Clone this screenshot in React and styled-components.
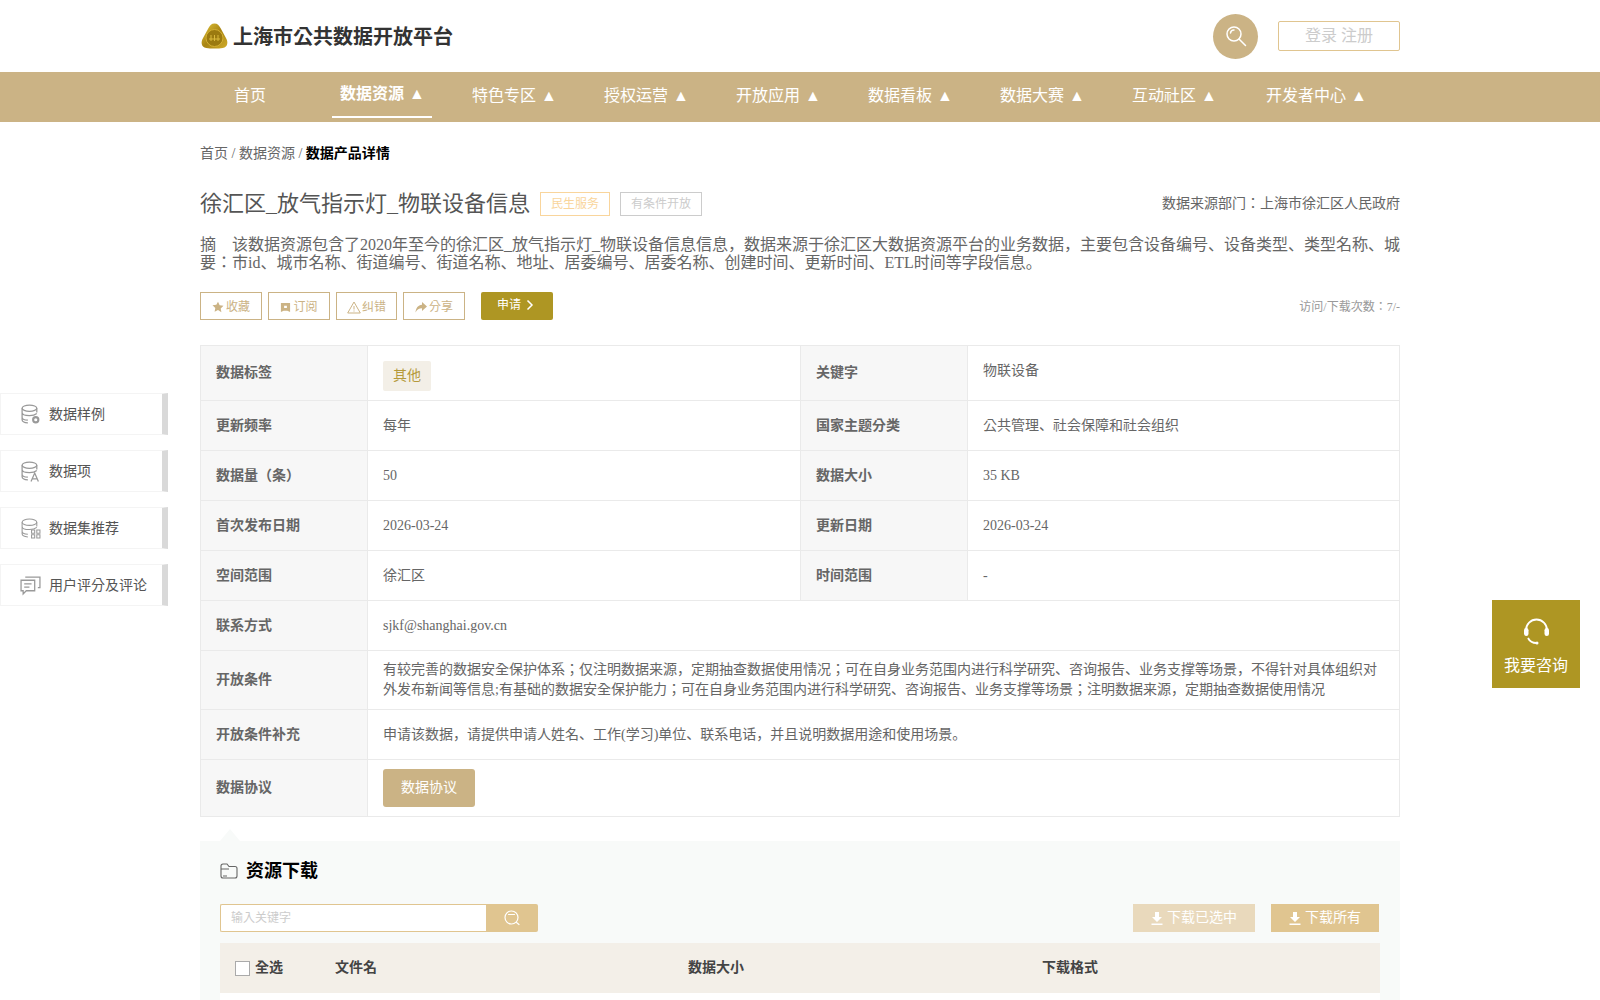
import React from "react";
import styled, { createGlobalStyle } from "styled-components";

const Global = createGlobalStyle`
  html, body { margin: 0; padding: 0; background: #fff; }
  body { font-family: "Liberation Serif", "Noto Sans CJK KR", serif; color: #666; line-height: 20px; }
  * { box-sizing: border-box; }
`;
const Page = styled.div`position: relative; width: 1600px; height: 1000px; overflow: hidden; background: #fff;`;
const Wrap = styled.div`width: 1200px; margin: 0 auto;`;
const Header = styled(Wrap)`height: 72px; display: flex; align-items: center; justify-content: space-between;`;
const Brand = styled.div`display: flex; align-items: center; gap: 5px; font-size: 20px; font-weight: bold; color: #333; margin-left: 1px; line-height: 22px;`;
const BrandName = styled.span`padding-top: 2px;`;
const HeadRight = styled.div`display: flex; align-items: center; gap: 20px;`;
const RoundSearch = styled.div`width: 45px; height: 45px; border-radius: 50%; background: #cbb385; display: flex; align-items: center; justify-content: center;`;
const Login = styled.div`width: 122px; height: 30px; border: 1px solid #e0c590; border-radius: 2px; color: #ccc; font-size: 16px; display: flex; align-items: center; justify-content: center;`;
const NavBar = styled.div`height: 50px; background: #cbb385;`;
const NavInner = styled(Wrap)`display: flex; gap: 32px;`;
const NavItem = styled.div`
  width: 100px; flex: none; height: 46px; margin-left: ${p => (p.$last ? "10px" : "0")}; line-height: ${p => (p.$active ? "44px" : "48px")};
  text-align: center; white-space: nowrap; font-size: 16px; color: #fff;
  font-weight: ${p => (p.$active ? "bold" : "normal")};
  border-bottom: 2px solid ${p => (p.$active ? "#fff" : "transparent")};
`;
const Arrow = styled.span`margin: 0 -1px 0 1px; font-weight: normal;`;
const Crumb = styled.div`margin-top: 22px; height: 20px; font-size: 14px; color: #666;`;
const CrumbNow = styled.b`color: #000;`;
const TitleRow = styled.div`margin-top: 25px; height: 30px; display: flex; align-items: center;`;
const Title = styled.h1`margin: 0; font-size: 22px; font-weight: normal; color: #555;`;
const Tag = styled.span`
  height: 24px; margin-left: ${p => p.$ml}px; width: ${p => p.$w}px; border: 1px solid ${p => p.$b};
  color: ${p => p.$c}; font-size: 12px; display: flex; align-items: center; justify-content: center;
`;
const Source = styled.div`margin-left: auto; font-size: 14px; color: #666;`;
const Desc = styled.div`margin-top: 17px; display: flex; font-size: 16px; line-height: 18px; color: #666;`;
const DescLabel = styled.div`width: 32px; flex: none;`;
const DescBody = styled.div`flex: 1; text-align: justify;`;
const Actions = styled.div`margin-top: 20px; height: 28px; display: flex; align-items: center; gap: 6px;`;
const ActBtn = styled.div`
  width: ${p => p.$w}px; height: 28px; padding-top: 2px; border: 1px solid #cbb385; color: #cbb385; font-size: 12px;
  display: flex; align-items: center; justify-content: center; gap: ${p => p.$g ?? 2}px;
`;
const Apply = styled.div`
  width: 72px; height: 28px; margin-left: 10px; padding: 0 0 3px 16px; background: #ae9623; border-radius: 2px; color: #fff; font-size: 12px;
  display: flex; align-items: center; gap: 5px;
`;
const Visits = styled.div`margin-left: auto; padding-top: 2px; font-size: 12px; color: #999;`;
const Table = styled.table`
  margin-top: 25px; width: 1199px; table-layout: fixed; border-collapse: collapse; font-size: 14px; color: #666;
  th, td { border: 1px solid #eaeaea; padding: 0 15px; text-align: left; }
  th { background: #f7f7f7; font-weight: bold; color: #666; }
`;
const Row = styled.tr`height: ${p => p.$h}px;`;
const Pill = styled.span`display: inline-block; margin-top: 5px; padding: 0 10px; height: 30px; line-height: 30px; background: #f3efe7; color: #b59a3c; border-radius: 2px;`;
const Raised = styled.span`position: relative; top: -2px;`;
const Agreement = styled.div`width: 92px; height: 38px; background: #cbb385; border-radius: 3px; color: #fff; display: flex; align-items: center; justify-content: center;`;
const Download = styled.section`position: relative; margin-top: 24px; height: 300px; background: #f8faf9; padding: 18px 20px 0;`;
const Tri = styled.div`position: absolute; left: 20px; top: -12px; width: 0; height: 0; border-left: 10px solid transparent; border-right: 10px solid transparent; border-bottom: 12px solid #f8faf9;`;
const DlHead = styled.div`display: flex; align-items: center; gap: 8px; height: 24px; font-size: 18px; font-weight: bold; color: #000;`;
const DlTools = styled.div`margin-top: 21px; display: flex; align-items: center; height: 28px;`;
const SearchBox = styled.div`width: 266px; height: 28px; background: #fff; border: 1px solid #e0c590; border-right: none; border-radius: 2px 0 0 2px; font-size: 12px; color: #ccc; display: flex; align-items: center; padding-left: 10px;`;
const SearchBtn = styled.div`width: 52px; height: 28px; background: #e0c590; border-radius: 0 2px 2px 0; display: flex; align-items: center; justify-content: center;`;
const DlBtn = styled.div`
  width: ${p => p.$w}px; height: 28px; margin-left: ${p => p.$ml}px; background: ${p => p.$bg}; color: #fff; font-size: 14px;
  display: flex; align-items: center; justify-content: center; gap: 4px;
`;
const ListHead = styled.div`
  margin-top: 11px; width: 1160px; height: 50px; background: #f3efe8; display: grid; grid-template-columns: 115px 353px 354px 1fr;
  align-items: center; font-size: 14px; font-weight: bold; color: #444;
`;
const AllCell = styled.label`display: flex; align-items: center; gap: 5px; padding-left: 15px;`;
const Check = styled.span`width: 15px; height: 15px; background: #fff; border: 1px solid #aaa;`;
const ListBody = styled.div`width: 1160px; height: 100px; background: #fff;`;
const Side = styled.nav`position: absolute; left: 0; top: 393px; display: flex; flex-direction: column; gap: 15px;`;
const SideItem = styled.div`
  width: 168px; height: 42px; background: #fff; border: 1px solid #f4f4f4; border-right: 6px solid #d9d9d9;
  display: flex; align-items: center; padding-left: 19px; gap: 8px; font-size: 14px; color: #555;
`;
const SideText = styled.span`padding-top: 2px;`;
const Consult = styled.div`
  position: absolute; left: 1492px; top: 600px; width: 88px; height: 88px; background: #ae9623; color: #fff; font-size: 16px;
  display: flex; flex-direction: column; align-items: center; padding-top: 18px; gap: 11px;
`;

const Lens = () => (
  <svg width="22" height="22" viewBox="0 0 22 22" fill="none" stroke="#fff" strokeWidth="1.5" strokeLinecap="round">
    <circle cx="9" cy="9" r="7" /><path d="M14 14l6.500 6.500M5.500 8a3.500 3.500 0 0 1 3.500-3" />
  </svg>
);
const SmallLens = () => (
  <svg width="16" height="16" viewBox="0 0 16 16" fill="none" stroke="#fff" strokeWidth="1.200" strokeLinecap="round">
    <circle cx="7.500" cy="7.500" r="6.500" /><path d="M12.500 12.500l2.500 2M4.500 4.500h6" />
  </svg>
);
const Logo = () => (
  <svg width="27" height="26" viewBox="0 0 27 26">
    <defs>
      <linearGradient id="g" x1="0" y1="0" x2="1" y2="1">
        <stop offset="0" stopColor="#e6c93c" /><stop offset=".5" stopColor="#a88413" /><stop offset="1" stopColor="#d1ad2a" />
      </linearGradient>
    </defs>
    <path d="M13.5 0.5c3 0 4.5 2 6 4.5l6 11c1.5 3 1.200 7-2 8.500-3 1.200-6.500 1-10 1s-7 .2-10-1c-3.200-1.500-3.500-5.500-2-8.500l6-11c1.500-2.500 3-4.500 6-4.500z" fill="url(#g)" />
    <circle cx="13.500" cy="15" r="8.500" fill="#9b7a10" stroke="#d4b033" />
    <path d="M8 16h11M10 12v6M13.500 12v6M17 12v6" stroke="#d9b93d" strokeWidth="1" fill="none" />
  </svg>
);
const Star = () => (<svg width="12" height="12" viewBox="0 0 24 24" fill="#cbb385"><path d="M12 1.500l3.300 7 7.700 1-5.600 5.300 1.400 7.700L12 18l-6.800 3.500 1.400-7.700L1 8.500l7.700-1z" /></svg>);
const Flag = () => (<svg width="11" height="11" viewBox="0 0 12 12"><path fillRule="evenodd" fill="#cbb385" d="M1 1h10v10L8 9.500H4L1 11zM4.500 4h3v2.500h-3z" /></svg>);
const Warn = () => (<svg width="14" height="13" viewBox="0 0 14 13" fill="none" stroke="#cbb385" strokeWidth="1"><path d="M7 1l6.300 11H.7zM7 5v3.500M7 9.500v1" /></svg>);
const Share = () => (<svg width="12" height="11" viewBox="0 0 12 11" fill="#cbb385"><path d="M7 0l5 4.500L7 9V6.300C4 6.300 2 7.500.5 10.500.8 6 3 3 7 2.700z" /></svg>);
const Chevron = () => (<svg width="8" height="12" viewBox="0 0 8 12" fill="none" stroke="#fff" strokeWidth="1.500"><path d="M1.500 1.500L6 6l-4.500 4.500" /></svg>);
const DbBase = () => (<><ellipse cx="9" cy="4" rx="7" ry="3" /><path d="M2 4v11c0 1.700 2.500 2.800 5.500 3M16 4v4M2 8c0 1.700 3 3 7 3 3 0 5.500-.7 7-2M2 12.500c0 1.500 2.500 2.700 5.500 2.900" /></>);
const DbGear = () => (<svg width="21" height="21" viewBox="0 0 20 20" fill="none" stroke="#999" strokeWidth="1.200"><DbBase /><circle cx="15" cy="15" r="2.500" strokeWidth="2" /></svg>);
const DbA = () => (<svg width="21" height="21" viewBox="0 0 20 20" fill="none" stroke="#999" strokeWidth="1.200"><DbBase /><path d="M10.500 19.500l3.500-8 3.500 8M12 17h4" /></svg>);
const DbGrid = () => (<svg width="21" height="21" viewBox="0 0 20 20" fill="none" stroke="#999" strokeWidth="1"><DbBase /><path d="M11 11.500h3v3h-3zM16 11.500h3v3h-3zM11 16h3v3h-3zM16 16h3v3h-3z" /></svg>);
const Chat = () => (<svg width="21" height="21" viewBox="0 0 20 20" fill="none" stroke="#999" strokeWidth="1.200"><path d="M1 5h13v10H6l-3 3v-3H1zM5 2h14v10h-2M4 8.500h7M4 11.500h5" /></svg>);
const Folder = () => (<svg width="18" height="16" viewBox="0 0 18 16" fill="none" stroke="#666" strokeWidth="1.100"><path d="M1 3a2 2 0 0 1 2-2h4l2 2.500h6a2 2 0 0 1 2 2V13a2 2 0 0 1-2 2H3a2 2 0 0 1-2-2z" /><path d="M1 6h8M3 13h4" /></svg>);
const Dl = () => (<svg width="12" height="13" viewBox="0 0 12 13" fill="#fff"><path d="M4 0h4v5h3L6 10 1 5h3zM.5 11.500h11V13H.5z" /></svg>);
const Headset = () => (
  <svg width="27" height="27" viewBox="0 0 27 27" fill="none" stroke="#fff" strokeWidth="1.800">
    <path d="M3 14V12a10.500 10.500 0 0 1 21 0v2M5 20c1.500 3 4 5 8.500 5" />
    <rect x="1" y="10" width="4.500" height="8" rx="2.200" fill="#fff" stroke="none" />
    <rect x="21.500" y="10" width="4.500" height="8" rx="2.200" fill="#fff" stroke="none" />
    <circle cx="14" cy="25" r="1.500" fill="#fff" stroke="none" />
  </svg>
);

const navs = ["数据资源", "特色专区", "授权运营", "开放应用", "数据看板", "数据大赛", "互动社区", "开发者中心"];

export default function App() {
  return (
    <Page>
      <Global />
      <Header>
        <Brand><Logo /><BrandName>上海市公共数据开放平台</BrandName></Brand>
        <HeadRight>
          <RoundSearch><Lens /></RoundSearch>
          <Login>登录 注册</Login>
        </HeadRight>
      </Header>
      <NavBar>
        <NavInner>
          <NavItem>首页</NavItem>
          {navs.map((n, i) => (
            <NavItem key={n} $active={i === 0} $last={i === navs.length - 1}>{n} <Arrow>▲</Arrow></NavItem>
          ))}
        </NavInner>
      </NavBar>
      <Wrap>
        <Crumb>首页 / 数据资源 / <CrumbNow>数据产品详情</CrumbNow></Crumb>
        <TitleRow>
          <Title>徐汇区_放气指示灯_物联设备信息</Title>
          <Tag $ml={10} $w={70} $b="#f9d59c" $c="#f9d59c">民生服务</Tag>
          <Tag $ml={10} $w={82} $b="#ccc" $c="#ccc">有条件开放</Tag>
          <Source>数据来源部门：上海市徐汇区人民政府</Source>
        </TitleRow>
        <Desc>
          <DescLabel>摘要：</DescLabel>
          <DescBody>该数据资源包含了2020年至今的徐汇区_放气指示灯_物联设备信息信息，数据来源于徐汇区大数据资源平台的业务数据，主要包含设备编号、设备类型、类型名称、城市id、城市名称、街道编号、街道名称、地址、居委编号、居委名称、创建时间、更新时间、ETL时间等字段信息。</DescBody>
        </Desc>
        <Actions>
          <ActBtn $w={62}><Star />收藏</ActBtn>
          <ActBtn $w={62}><Flag />订阅</ActBtn>
          <ActBtn $w={61} $g={1}><Warn />纠错</ActBtn>
          <ActBtn $w={62}><Share />分享</ActBtn>
          <Apply>申请<Chevron /></Apply>
          <Visits>访问/下载次数：7/-</Visits>
        </Actions>
        <Table>
          <colgroup><col width="167" /><col width="433" /><col width="167" /><col width="432" /></colgroup>
          <tbody>
            <Row $h={55}><th>数据标签</th><td><Pill>其他</Pill></td><th>关键字</th><td><Raised>物联设备</Raised></td></Row>
            <Row $h={50}><th>更新频率</th><td>每年</td><th>国家主题分类</th><td>公共管理、社会保障和社会组织</td></Row>
            <Row $h={50}><th>数据量（条）</th><td>50</td><th>数据大小</th><td>35 KB</td></Row>
            <Row $h={50}><th>首次发布日期</th><td>2026-03-24</td><th>更新日期</th><td>2026-03-24</td></Row>
            <Row $h={50}><th>空间范围</th><td>徐汇区</td><th>时间范围</th><td>-</td></Row>
            <Row $h={50}><th>联系方式</th><td colSpan={3}>sjkf@shanghai.gov.cn</td></Row>
            <Row $h={59}><th>开放条件</th><td colSpan={3}>有较完善的数据安全保护体系；仅注明数据来源，定期抽查数据使用情况；可在自身业务范围内进行科学研究、咨询报告、业务支撑等场景，不得针对具体组织对外发布新闻等信息;有基础的数据安全保护能力；可在自身业务范围内进行科学研究、咨询报告、业务支撑等场景；注明数据来源，定期抽查数据使用情况</td></Row>
            <Row $h={50}><th>开放条件补充</th><td colSpan={3}>申请该数据，请提供申请人姓名、工作(学习)单位、联系电话，并且说明数据用途和使用场景。</td></Row>
            <Row $h={57}><th>数据协议</th><td colSpan={3}><Agreement>数据协议</Agreement></td></Row>
          </tbody>
        </Table>
        <Download>
          <Tri />
          <DlHead><Folder />资源下载</DlHead>
          <DlTools>
            <SearchBox>输入关键字</SearchBox>
            <SearchBtn><SmallLens /></SearchBtn>
            <DlBtn $w={122} $ml={595} $bg="#e9d9bc"><Dl />下载已选中</DlBtn>
            <DlBtn $w={108} $ml={16} $bg="#e0c590"><Dl />下载所有</DlBtn>
          </DlTools>
          <ListHead>
            <AllCell><Check />全选</AllCell>
            <span>文件名</span><span>数据大小</span><span>下载格式</span>
          </ListHead>
          <ListBody />
        </Download>
      </Wrap>
      <Side>
        <SideItem><DbGear /><SideText>数据样例</SideText></SideItem>
        <SideItem><DbA /><SideText>数据项</SideText></SideItem>
        <SideItem><DbGrid /><SideText>数据集推荐</SideText></SideItem>
        <SideItem><Chat /><SideText>用户评分及评论</SideText></SideItem>
      </Side>
      <Consult><Headset />我要咨询</Consult>
    </Page>
  );
}
